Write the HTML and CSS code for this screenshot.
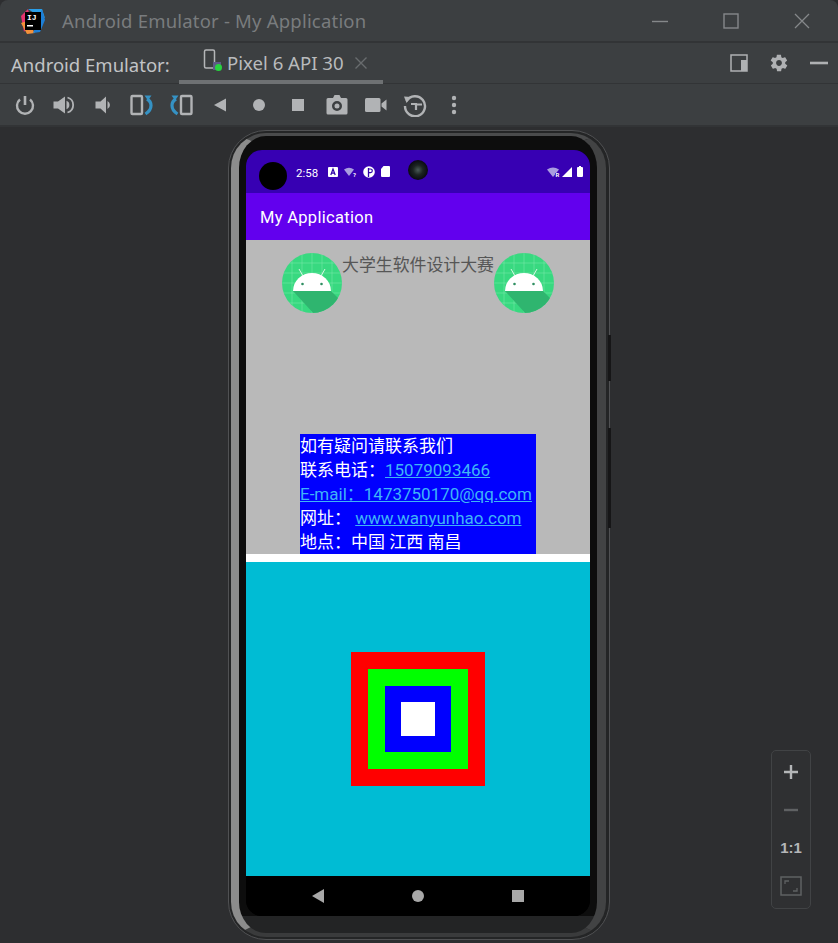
FILE: index.html
```html
<!DOCTYPE html>
<html lang="zh">
<head>
  <meta charset="UTF-8" />
  <title>Android Emulator - My Application</title>
  <link rel="stylesheet" href="styles.css">
</head>
<body>
  <div class="titlebar">
    <svg class="ij-logo" width="28" height="28" viewBox="0 0 28 28">
      <polygon points="2,9 9,2 12,14 5,25" fill="#e8336f"/>
      <polygon points="9,2 23,2 26,11 15,6" fill="#2a9ee8"/>
      <polygon points="2,16 8,27 16,26 8,14" fill="#f5913a"/>
      <polygon points="23,2 26,13 21,25 14,26" fill="#1d7fd6"/>
      <rect x="6" y="5" width="16" height="18" fill="#000"/>
      <text x="8" y="13" class="ij-text">IJ</text>
      <rect x="8" y="18" width="6" height="1.5" fill="#fff"/>
    </svg>
    <span class="window-title">Android Emulator - My Application</span>
    <div class="window-btns">
      <svg width="18" height="18" viewBox="0 0 18 18"><path d="M1 9.500h16" stroke="#85888a" stroke-width="1.400"/></svg>
      <svg width="18" height="18" viewBox="0 0 18 18"><rect x="2" y="2" width="14" height="14" fill="none" stroke="#85888a" stroke-width="1.400"/></svg>
      <svg width="18" height="18" viewBox="0 0 18 18"><path d="M2 2l14 14M16 2L2 16" stroke="#85888a" stroke-width="1.300"/></svg>
    </div>
  </div>

  <div class="tabbar">
    <span class="tabbar-label">Android Emulator:</span>
    <div class="tab">
      <svg width="20" height="24" viewBox="0 0 20 24">
        <rect x="1.500" y="1" width="10" height="18" rx="1.500" fill="none" stroke="#b4b6b8" stroke-width="1.500"/>
        <rect x="10" y="13" width="8" height="8" fill="#5f5a86"/>
        <circle cx="15.500" cy="18.500" r="3.500" fill="#27d33f"/>
      </svg>
      <span class="tab-name">Pixel 6 API 30</span>
      <svg class="tab-close" width="12" height="12" viewBox="0 0 12 12"><path d="M0.500 0.500l11 11M11.500 0.500l-11 11" stroke="#696c6e" stroke-width="1.400"/></svg>
    </div>
    <div class="tabbar-icons">
      <svg width="18" height="18" viewBox="0 0 18 18"><rect x="1" y="1" width="16" height="16" fill="none" stroke="#afb1b3" stroke-width="1.500"/><rect x="11" y="6" width="6" height="11" fill="#afb1b3"/></svg>
      <svg width="20" height="20" viewBox="0 0 24 24"><path fill="#afb1b3" d="M19.400 13c0-.3.1-.6.1-1s0-.7-.1-1l2.100-1.600c.2-.2.2-.4.1-.6l-2-3.500c-.1-.2-.4-.3-.6-.2l-2.500 1c-.5-.4-1.100-.7-1.700-1l-.4-2.600c0-.3-.2-.5-.5-.5h-4c-.3 0-.5.2-.5.4l-.4 2.700c-.6.2-1.100.6-1.700 1l-2.500-1c-.2-.1-.5 0-.6.2l-2 3.500c-.1.2 0 .4.1.6L4.600 11c0 .3-.1.7-.1 1s0 .7.1 1l-2.100 1.600c-.2.2-.2.4-.1.6l2 3.500c.1.2.4.3.6.2l2.500-1c.5.4 1.100.7 1.700 1l.4 2.600c0 .2.2.4.5.4h4c.3 0 .5-.2.5-.4l.4-2.600c.6-.3 1.200-.6 1.700-1l2.500 1c.2.1.5 0 .6-.2l2-3.500c.1-.2.1-.5-.1-.6L19.400 13zM12 15.500c-1.900 0-3.500-1.600-3.500-3.500s1.600-3.500 3.500-3.500 3.500 1.600 3.500 3.500-1.600 3.500-3.500 3.500z"/></svg>
      <svg width="18" height="18" viewBox="0 0 18 18"><path d="M0 9h18" stroke="#afb1b3" stroke-width="2.600"/></svg>
    </div>
  </div>

  <div class="toolbar">
    <div class="tool"><svg width="24" height="24" viewBox="0 0 24 24"><path d="M7 6.500a8 8 0 1 0 10 0" fill="none" stroke="#b1b3b5" stroke-width="2.400"/><path d="M12 3v9" stroke="#b1b3b5" stroke-width="2.600"/></svg></div>
    <div class="tool"><svg width="24" height="24" viewBox="0 0 24 24"><path fill="#b1b3b5" d="M1.500 8.500h4.500L13 3.500v17l-7-5H1.500z"/><path d="M14.500 7.800a4.500 4.500 0 0 1 0 8.400z" fill="#b1b3b5"/><path d="M15.500 4.500a7.800 7.800 0 0 1 0 15" fill="none" stroke="#b1b3b5" stroke-width="1.800"/></svg></div>
    <div class="tool"><svg width="24" height="24" viewBox="0 0 24 24"><path fill="#b1b3b5" d="M4.500 8.500h5L15 3.500v17l-5.500-5h-5z"/><path d="M16.500 8a4.500 4.500 0 0 1 0 8z" fill="#b1b3b5"/></svg></div>
    <div class="tool"><svg width="24" height="24" viewBox="0 0 24 24"><rect x="1.500" y="3" width="10.500" height="18" rx="1" fill="none" stroke="#b1b3b5" stroke-width="2.400"/><path d="M17 6c3.500 2 4 4 4 6.500 0 3-1.500 6-5.500 8.500" fill="none" stroke="#3592c4" stroke-width="3.200"/><path d="M14.500 2.500h7l-3.500 5z" fill="#3592c4"/></svg></div>
    <div class="tool"><svg width="24" height="24" viewBox="0 0 24 24"><rect x="12" y="3" width="10.500" height="18" rx="1" fill="none" stroke="#b1b3b5" stroke-width="2.400"/><path d="M7 6c-3.500 2-4 4-4 6.500 0 3 1.500 6 5.500 8.500" fill="none" stroke="#3592c4" stroke-width="3.200"/><path d="M9.500 2.500h-7l3.500 5z" fill="#3592c4"/></svg></div>
    <div class="tool"><svg width="24" height="24" viewBox="0 0 24 24"><path fill="#b1b3b5" d="M18 5.500v13L6 12z"/></svg></div>
    <div class="tool"><svg width="24" height="24" viewBox="0 0 24 24"><circle cx="12" cy="12" r="6" fill="#b1b3b5"/></svg></div>
    <div class="tool"><svg width="24" height="24" viewBox="0 0 24 24"><rect x="6" y="6" width="12" height="12" fill="#b1b3b5"/></svg></div>
    <div class="tool"><svg width="24" height="24" viewBox="0 0 24 24"><path fill="#b1b3b5" fill-rule="evenodd" d="M8 5l1.500-3h5L16 5h5a1.500 1.500 0 0 1 1.500 1.500V20a1.500 1.500 0 0 1-1.500 1.500H3A1.500 1.500 0 0 1 1.500 20V6.500A1.500 1.500 0 0 1 3 5zM12 8a5 5 0 1 0 0 10 5 5 0 0 0 0-10zM12 10.500a2.500 2.500 0 1 1 0 5 2.500 2.500 0 0 1 0-5z"/></svg></div>
    <div class="tool"><svg width="24" height="24" viewBox="0 0 24 24"><rect x="1" y="5" width="15.500" height="14" rx="1.500" fill="#b1b3b5"/><path fill="#b1b3b5" d="M17.500 10.500l5-4v11l-5-4z"/></svg></div>
    <div class="tool"><svg width="24" height="24" viewBox="0 0 24 24"><path d="M3.500 8A10 10 0 1 1 2 13" fill="none" stroke="#b1b3b5" stroke-width="2.400"/><path d="M1 3.500l7 .5-4.500 6z" fill="#b1b3b5"/><path d="M8 11h5v6M13 11.500h6" fill="none" stroke="#b1b3b5" stroke-width="2.200"/></svg></div>
    <div class="tool"><svg width="24" height="24" viewBox="0 0 24 24"><circle cx="12" cy="5" r="2.200" fill="#b1b3b5"/><circle cx="12" cy="12" r="2.200" fill="#b1b3b5"/><circle cx="12" cy="19" r="2.200" fill="#b1b3b5"/></svg></div>
  </div>

  <div class="main">
    <div class="phone">
      <span class="side-btn side-power"></span>
      <span class="side-btn side-volume"></span>
      <div class="phone-edge">
        <div class="screen">
          <div class="statusbar">
            <span class="clock">2:58</span>
            <div class="status-icons">
              <svg width="10" height="10" viewBox="0 0 10 10"><rect width="10" height="10" rx="1" fill="#fff"/><path d="M2.800 8L5 2l2.200 6M3.500 6.200h3" fill="none" stroke="#2f00a8" stroke-width="1.200"/></svg>
              <svg width="13" height="10" viewBox="0 0 13 10"><path d="M0 2.500Q5-1 10 2.500L5 9z" fill="#a99de0"/><text x="9" y="10" class="wifi-q">?</text></svg>
              <svg width="12" height="12" viewBox="0 0 12 12"><circle cx="6" cy="6" r="5.800" fill="#fff"/><path d="M5.500 11V2" stroke="#2f00a8" stroke-width="1.300"/><path d="M6 3h1.500a1.800 1.800 0 0 1 0 3.600H6" fill="none" stroke="#2f00a8" stroke-width="1.200"/></svg>
              <svg width="9" height="11" viewBox="0 0 9 11"><path d="M2.500 0H8a1 1 0 0 1 1 1v9a1 1 0 0 1-1 1H1a1 1 0 0 1-1-1V3z" fill="#fff"/></svg>
            </div>
            <div class="status-right">
              <svg width="13" height="10" viewBox="0 0 13 10"><path d="M0 2.500Q6-1.500 12 2.500L6 10z" fill="#a99de0"/><rect x="8" y="6" width="4" height="4" fill="#2f00a8"/><text x="8.500" y="10" class="wifi-r">R</text></svg>
              <svg width="10" height="10" viewBox="0 0 10 10"><path d="M10 0v10H0z" fill="#fff"/></svg>
              <svg class="battery" width="6" height="11" viewBox="0 0 6 11"><path d="M2 0h2v1h1a1 1 0 0 1 1 1v8a1 1 0 0 1-1 1H1a1 1 0 0 1-1-1V2a1 1 0 0 1 1-1h1z" fill="#fff"/></svg>
            </div>
            <span class="punch-hole"></span>
            <span class="front-camera"></span>
          </div>
          <div class="appbar">My Application</div>

          <div class="gray-area">
            <div class="banner">
              <svg class="android-icon" width="60" height="60" viewBox="0 0 60 60">
                <defs><clipPath id="round"><circle cx="30" cy="30" r="30"/></clipPath></defs>
                <g clip-path="url(#round)">
                  <rect width="60" height="60" fill="#38d980"/>
                  <path d="M10 0v60M20 0v60M30 0v60M40 0v60M50 0v60M0 10h60M0 20h60M0 30h60M0 40h60M0 50h60" stroke="#7fe8ae" stroke-width="0.500"/>
                  <path d="M11 38h38l14 14v10H33z" fill="#2fb56f"/>
                </g>
                <path d="M17 16l4 7M43 16l-4 7" stroke="#d8f7e6" stroke-width="1"/>
                <path d="M11 38a19 18 0 0 1 38 0z" fill="#fff"/>
                <circle cx="20.500" cy="31" r="1.300" fill="#2f8f62"/>
                <circle cx="39.500" cy="31" r="1.300" fill="#2f8f62"/>
              </svg>
              <span class="banner-title">大学生软件设计大赛</span>
              <svg class="android-icon" width="60" height="60" viewBox="0 0 60 60">
                <g clip-path="url(#round)">
                  <rect width="60" height="60" fill="#38d980"/>
                  <path d="M10 0v60M20 0v60M30 0v60M40 0v60M50 0v60M0 10h60M0 20h60M0 30h60M0 40h60M0 50h60" stroke="#7fe8ae" stroke-width="0.500"/>
                  <path d="M11 38h38l14 14v10H33z" fill="#2fb56f"/>
                </g>
                <path d="M17 16l4 7M43 16l-4 7" stroke="#d8f7e6" stroke-width="1"/>
                <path d="M11 38a19 18 0 0 1 38 0z" fill="#fff"/>
                <circle cx="20.500" cy="31" r="1.300" fill="#2f8f62"/>
                <circle cx="39.500" cy="31" r="1.300" fill="#2f8f62"/>
              </svg>
            </div>
            <div class="contact">
              <div>如有疑问请联系我们</div>
              <div>联系电话：<a class="link">15079093466</a></div>
              <div><a class="link">E-mail：1473750170@qq.com</a></div>
              <div>网址： <a class="link">www.wanyunhao.com</a></div>
              <div>地点：中国 江西 南昌</div>
            </div>
          </div>

          <div class="cyan-area">
            <div class="box box-red">
              <div class="box box-green">
                <div class="box box-blue">
                  <div class="box box-white"></div>
                </div>
              </div>
            </div>
          </div>

          <div class="navbar">
            <svg width="14" height="16" viewBox="0 0 14 16"><path d="M13 1v14L1 8z" fill="#a8a8a8"/></svg>
            <svg width="14" height="14" viewBox="0 0 14 14"><circle cx="7" cy="7" r="6" fill="#a8a8a8"/></svg>
            <svg width="14" height="14" viewBox="0 0 14 14"><rect x="1" y="1" width="12" height="12" fill="#a8a8a8"/></svg>
          </div>
        </div>
      </div>
    </div>

    <div class="zoom-panel">
      <svg width="18" height="18" viewBox="0 0 18 18"><path d="M9 2v14M2 9h14" stroke="#b4b6b8" stroke-width="2.400"/></svg>
      <svg width="18" height="18" viewBox="0 0 18 18"><path d="M2 9h14" stroke="#5f6163" stroke-width="2.400"/></svg>
      <span class="zoom-reset">1:1</span>
      <svg width="22" height="20" viewBox="0 0 22 20"><rect x="1" y="1" width="20" height="18" fill="none" stroke="#5f6163" stroke-width="1.500"/><path d="M5 8V5h4M17 12v3h-4" fill="none" stroke="#5f6163" stroke-width="1.300"/></svg>
    </div>
  </div>
</body>
</html>
```

FILE: styles.css
```css
* {
  box-sizing: border-box;
}
html, body {
  margin: 0;
  height: 943px;
  overflow: hidden;
}
body {
  background: #2d2e30;
  font-family: "Noto Sans", "Noto Sans CJK SC", sans-serif;
  display: flex;
  flex-direction: column;
}

/* window chrome */
.titlebar {
  height: 43px;
  background: #3c3f41;
  border-bottom: 2px solid #323436;
  border-radius: 8px 8px 0 0;
  display: flex;
  align-items: center;
  padding-left: 19px;
}
.ij-logo {
  flex: none;
}
.ij-text {
  font-family: "Liberation Mono", monospace;
  font-size: 8px;
  font-weight: bold;
  fill: #fff;
}
.window-title {
  margin-left: 15px;
  color: #797c7e;
  font-size: 18.5px;
  letter-spacing: 0.2px;
}
.window-btns {
  margin-left: auto;
  margin-right: 27px;
  display: flex;
  gap: 53px;
}
.tabbar {
  height: 41px;
  background: #3c3f41;
  border-bottom: 1px solid #323436;
  display: flex;
  align-items: center;
  padding-left: 11px;
}
.tabbar-label {
  color: #c2c4c6;
  font-size: 18.5px;
  width: 192px;
  padding-top: 2px;
}
.tab {
  display: flex;
  align-items: center;
  height: 41px;
  width: 204px;
  margin-left: -24px;
  padding-left: 24px;
  border-bottom: 4px solid #6e7173;
}
.tab-name {
  color: #b9bbbd;
  font-size: 18.6px;
  margin: 0 11px 0 4px;
  padding-top: 2px;
}
.tab-close {
  margin-top: 3px;
}
.tabbar-icons {
  margin-left: auto;
  margin-right: 10px;
  display: flex;
  align-items: center;
  gap: 21px;
}
.toolbar {
  height: 43px;
  background: #3c3f41;
  border-bottom: 2px solid #323436;
  display: flex;
  align-items: center;
  padding-left: 5px;
}
.tool {
  width: 39px;
  display: flex;
  justify-content: center;
}

/* phone */
.main {
  flex: 1;
  position: relative;
  padding: 3px 0 0 228px;
}
.phone {
  position: relative;
  width: 382px;
  height: 810px;
  background: #242526;
  border: 1px solid #505153;
  border-radius: 38px;
  padding: 2px 3px 2px 2px;
}
.phone-edge {
  height: 100%;
  border-radius: 35px;
  border-style: solid;
  border-width: 3px 9px 4px 8px;
  border-color: #4a4b4c #424344 #3a3b3c #8c8c8c;
  background: linear-gradient(#0d0d0d 0, #0d0d0d 97.9%, #232425 97.9%);
  padding: 14px 7px 17px 7px;
}
.side-btn {
  position: absolute;
  right: -2px;
  width: 3px;
  background: #161617;
}
.side-power {
  top: 204px;
  height: 46px;
}
.side-volume {
  top: 297px;
  height: 100px;
}
.screen {
  width: 344px;
  height: 766px;
  border-radius: 16px;
  overflow: hidden;
  background: #000;
  display: flex;
  flex-direction: column;
}
.statusbar {
  height: 43px;
  background: #3700b3;
  position: relative;
  display: flex;
  align-items: center;
  padding: 0 7px 0 50px;
  color: #fff;
}
.clock {
  font-family: Roboto, sans-serif;
  font-size: 11.5px;
  font-weight: 400;
  padding-top: 2px;
}
.status-icons {
  display: flex;
  align-items: center;
  gap: 6px;
  margin-left: 10px;
}
.status-right {
  margin-left: auto;
  display: flex;
  align-items: center;
  gap: 2px;
}
.battery {
  margin-left: 3px;
}
.wifi-q, .wifi-r {
  font-family: Roboto, sans-serif;
  font-size: 6px;
  font-weight: bold;
  fill: #fff;
}
.punch-hole {
  position: absolute;
  left: 13px;
  top: 12px;
  width: 28px;
  height: 28px;
  border-radius: 50%;
  background: #000;
}
.front-camera {
  position: absolute;
  left: 162px;
  top: 10px;
  width: 20px;
  height: 20px;
  border-radius: 50%;
  background: radial-gradient(circle at 50% 50%, #4a5a58 0, #1c2422 35%, #0a0a12 70%);
}
.appbar {
  height: 47px;
  background: #6200ee;
  color: #fff;
  font-family: Roboto, sans-serif;
  font-size: 16.5px;
  font-weight: 400;
  letter-spacing: 0.3px;
  display: flex;
  align-items: center;
  padding: 1px 0 0 14px;
}
.gray-area {
  height: 314px;
  background: #b9b9b9;
  display: flex;
  flex-direction: column;
  align-items: center;
}
.banner {
  display: flex;
  align-items: flex-start;
  padding-top: 13px;
}
.android-icon {
  display: block;
}
.banner-title {
  width: 152px;
  color: #565656;
  font-size: 16.9px;
  line-height: 24px;
  white-space: nowrap;
}
.contact {
  margin-top: auto;
  width: 236px;
  height: 120px;
  background: #0000ff;
  color: #fff;
  font-family: Roboto, "Noto Sans CJK SC", sans-serif;
  font-size: 17px;
  line-height: 24px;
  white-space: nowrap;
}
.link {
  color: #3fb4f7;
  text-decoration: underline;
}
.cyan-area {
  border-top: 8px solid #fff;
  height: 322px;
  background: #00bcd4;
  display: flex;
  align-items: center;
  justify-content: center;
}
.box {
  display: flex;
  align-items: center;
  justify-content: center;
}
.box-red {
  width: 134px;
  height: 134px;
  background: #ff0000;
}
.box-green {
  width: 100px;
  height: 100px;
  background: #00ff00;
}
.box-blue {
  width: 66px;
  height: 66px;
  background: #0000ff;
}
.box-white {
  width: 34px;
  height: 34px;
  background: #fff;
}
.navbar {
  flex: 1;
  background: #000;
  display: flex;
  align-items: center;
  padding-left: 65px;
  gap: 86px;
}

/* zoom controls, floats over the emulator background */
.zoom-panel {
  position: absolute;
  right: 27px;
  top: 623px;
  width: 40px;
  height: 159px;
  border: 1px solid #414345;
  border-radius: 5px;
  background: #2f3032;
  display: flex;
  flex-direction: column;
  align-items: center;
  justify-content: space-between;
  padding: 12px 0;
}
.zoom-reset {
  color: #b4b6b8;
  font-family: "Liberation Sans", sans-serif;
  font-size: 15px;
  font-weight: bold;
}
```
